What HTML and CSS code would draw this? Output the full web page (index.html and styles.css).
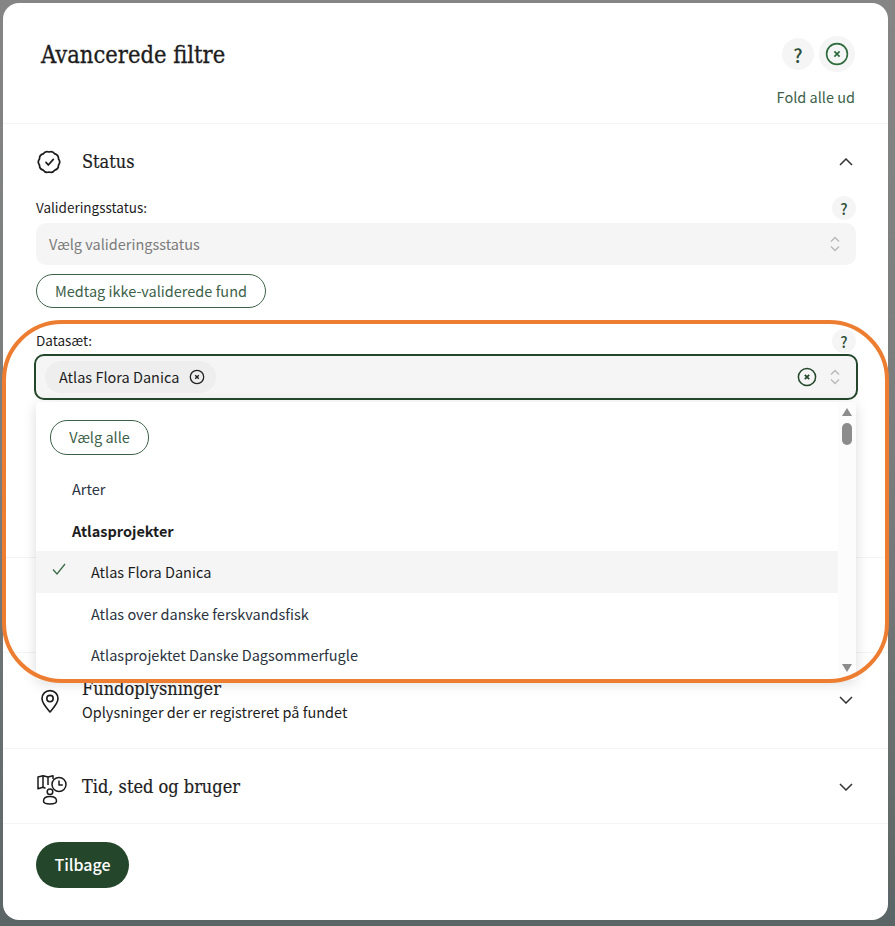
FILE: index.html
```html
<!DOCTYPE html>
<html lang="da">
  <head>
    <meta charset="UTF-8" />
    <title>Avancerede filtre</title>
    <link rel="stylesheet" href="styles.css">
  </head>

  <body>
    <div class="modal">
      <div class="modal-head">
        <h1 class="modal-title">Avancerede filtre</h1>
        <div class="modal-tools">
          <div class="modal-buttons">
            <span class="help help-big">?</span>
            <span class="close-round">
              <svg width="24" height="24" viewBox="0 0 24 24" fill="none" stroke="#2e6b3c">
                <circle cx="12" cy="12" r="10.4" stroke-width="1.6" />
                <path d="M9.4 9.4l5.2 5.2M14.6 9.4l-5.2 5.2" stroke-width="1.7" />
              </svg>
            </span>
          </div>
          <a class="fold-link" href="#">Fold alle ud</a>
        </div>
      </div>

      <div class="section section-status">
        <div class="section-head">
          <svg class="section-icon" width="26" height="26" viewBox="0 0 26 26" fill="none" stroke="#1b1b1b" stroke-width="1.7" stroke-linejoin="round" stroke-linecap="round">
            <path d="M13 3A5 5 0 0 1 18.88 4.91A5 5 0 0 1 22.51 9.91A5 5 0 0 1 22.51 16.09A5 5 0 0 1 18.88 21.09A5 5 0 0 1 13 23A5 5 0 0 1 7.12 21.09A5 5 0 0 1 3.49 16.09A5 5 0 0 1 3.49 9.91A5 5 0 0 1 7.12 4.91A5 5 0 0 1 13 3z" />
            <path d="M10 13.4l2.300 2.600 5-5.600" />
          </svg>
          <span class="section-name">Status</span>
          <svg class="chevron" width="14" height="8" viewBox="0 0 14 8" fill="none" stroke="#333" stroke-width="1.5">
            <path d="M1 7l6-6 6 6" />
          </svg>
        </div>

        <div class="field-label">
          <span class="field-name">Valideringsstatus:</span>
          <span class="help">?</span>
        </div>
        <div class="select">
          <span class="select-text">Vælg valideringsstatus</span>
          <svg class="updown" width="12" height="18" viewBox="0 0 12 18" fill="none" stroke="#b9b9b9" stroke-width="1.4">
            <path d="M2 6.5l4-4 4 4M2 11.5l4 4 4-4" />
          </svg>
        </div>
        <button class="pill pill-include">Medtag ikke-validerede fund</button>

        <div class="field-label field-label-data">
          <span class="field-name">Datasæt:</span>
          <span class="help">?</span>
        </div>
        <div class="field-wrap">
          <div class="select select-open">
            <span class="chip">
              <span class="chip-text">Atlas Flora Danica</span>
              <svg width="16" height="16" viewBox="0 0 16 16" fill="none" stroke="#222">
                <circle cx="8" cy="8" r="6.7" stroke-width="1.3" />
                <path d="M6.2 6.2l3.6 3.6M9.8 6.2l-3.6 3.6" stroke-width="1.4" />
              </svg>
            </span>
            <svg class="clear" width="20" height="20" viewBox="0 0 20 20" fill="none" stroke="#24472b">
              <circle cx="10" cy="10" r="8.6" stroke-width="1.5" />
              <path d="M7.8 7.8l4.4 4.4M12.2 7.8l-4.4 4.4" stroke-width="1.7" />
            </svg>
            <svg class="updown" width="12" height="18" viewBox="0 0 12 18" fill="none" stroke="#b9b9b9" stroke-width="1.4">
              <path d="M2 6.5l4-4 4 4M2 11.5l4 4 4-4" />
            </svg>
          </div>

          <div class="dropdown">
            <div class="dropdown-list">
              <button class="pill pill-all">Vælg alle</button>
              <div class="option option-top">Arter</div>
              <div class="option option-group">Atlasprojekter</div>
              <div class="option option-sub option-selected">
                <svg class="check" width="14" height="12" viewBox="0 0 14 12" fill="none" stroke="#3b6b48" stroke-width="1.3">
                  <path d="M1 6.5l4 4.5 8-10" />
                </svg>
                Atlas Flora Danica
              </div>
              <div class="option option-sub">Atlas over danske ferskvandsfisk</div>
              <div class="option option-sub">Atlasprojektet Danske Dagsommerfugle</div>
            </div>
            <div class="scrollbar">
              <span class="arrow-up"></span>
              <span class="thumb"></span>
              <span class="arrow-down"></span>
            </div>
          </div>
        </div>
      </div>

      <div class="section section-hidden"></div>

      <div class="section section-find">
        <div class="section-head">
          <svg class="section-icon icon-pin" width="26" height="26" viewBox="0 0 26 26" fill="none" stroke="#1b1b1b" stroke-width="1.6">
            <path d="M13 24c-1.2-1.7-8-8-8-13.4C5 6 8.500 2.600 13 2.600s8 3.400 8 8c0 5.400-6.800 11.700-8 13.400z" stroke-linejoin="round" />
            <circle cx="13" cy="10.600" r="3.200" />
          </svg>
          <div class="section-text">
            <span class="section-name">Fundoplysninger</span>
            <span class="section-sub">Oplysninger der er registreret på fundet</span>
          </div>
          <svg class="chevron" width="14" height="8" viewBox="0 0 14 8" fill="none" stroke="#333" stroke-width="1.5">
            <path d="M1 1l6 6 6-6" />
          </svg>
        </div>
      </div>

      <div class="section section-time">
        <div class="section-head">
          <svg class="section-icon icon-combo" width="30" height="30" viewBox="0 0 30 30" fill="none" stroke="#1b1b1b" stroke-width="1.500" stroke-linejoin="round">
            <path d="M8.500 13.200L6 12.300 1 13.800V2L6 .8l5 1.200 5-1.200V4" />
            <path d="M6 .8v11.500M11 2v8" />
            <circle cx="22" cy="9.500" r="7" />
            <path d="M22 5.500v4.500h3.800" />
            <circle cx="13" cy="16.800" r="2.800" />
            <path d="M6.500 26c0-3 3-4.500 6.500-4.500s6.500 1.500 6.500 4.500c0 2-2.500 3-6.500 3s-6.500-1-6.500-3z" />
          </svg>
          <span class="section-name">Tid, sted og bruger</span>
          <svg class="chevron" width="14" height="8" viewBox="0 0 14 8" fill="none" stroke="#333" stroke-width="1.5">
            <path d="M1 1l6 6 6-6" />
          </svg>
        </div>
      </div>

      <div class="modal-foot">
        <button class="back">Tilbage</button>
      </div>
    </div>

    <div class="highlight"></div>
  </body>
</html>
```

FILE: styles.css
```css
* {
  box-sizing: border-box;
}

html,
body {
  margin: 0;
  padding: 0;
}

body {
  width: 895px;
  height: 926px;
  padding: 3px 7px 6px 3px;
  overflow: hidden;
  position: relative;
  background: linear-gradient(180deg, #858585 0%, #7a7c7c 50%, #5c6565 100%);
  font-family: "Noto Sans CJK SC", "Noto Sans", sans-serif;
  font-size: 14.5px;
  color: #1d1d1d;
}

.modal {
  height: 917px;
  background: #ffffff;
  border-radius: 16px;
  display: flex;
  flex-direction: column;
}

.modal-head {
  height: 121px;
  padding: 0 33px 0 38px;
  display: flex;
  justify-content: space-between;
  border-bottom: 1px solid #f4f4f4;
}

.modal-title {
  margin: 37px 0 0 0;
  font-family: "DejaVu Serif Condensed", "DejaVu Serif", serif;
  font-size: 23.5px;
  line-height: 30px;
  font-weight: 400;
  -webkit-text-stroke: 0.3px #1d1d1d;
}

.modal-tools {
  display: flex;
  flex-direction: column;
  align-items: flex-end;
}

.modal-buttons {
  margin-top: 33px;
  display: flex;
  align-items: center;
  gap: 5px;
  height: 36px;
}

.help {
  width: 24px;
  height: 24px;
  border-radius: 50%;
  background: #f5f5f5;
  color: #2f4f38;
  font-size: 15px;
  font-weight: 500;
  display: flex;
  align-items: center;
  justify-content: center;
}

.help-big {
  width: 32px;
  height: 32px;
  font-size: 19px;
}

.close-round {
  width: 36px;
  height: 36px;
  border-radius: 50%;
  background: #f5f5f5;
  display: flex;
  align-items: center;
  justify-content: center;
}

.fold-link {
  margin-top: 15px;
  font-size: 14.5px;
  line-height: 20px;
  color: #3c6148;
  text-decoration: none;
}

.section {
  border-bottom: 1px solid #f4f4f4;
  padding: 0 32px 0 33px;
}

.section-status {
  height: 434px;
}

.section-hidden {
  height: 95px;
}

.section-find {
  height: 96px;
}

.section-time {
  height: 75px;
}

.section-head {
  display: flex;
  align-items: center;
}

.section-status .section-head {
  height: 72px;
  padding-top: 3px;
}

.section-find .section-head {
  height: 94px;
}

.section-time .section-head {
  height: 76px;
}

.section-icon {
  width: 26px;
  margin-right: 20px;
  flex: none;
}

.icon-pin {
  margin-left: 1px;
  margin-right: 19px;
  margin-top: 2px;
}

.icon-combo {
  width: 30px;
  margin-left: 1px;
  margin-top: 6px;
  margin-right: 15px;
}

.section-text {
  display: flex;
  flex-direction: column;
}

.section-name {
  font-family: "DejaVu Serif Condensed", "DejaVu Serif", serif;
  font-size: 18px;
  line-height: 24px;
  -webkit-text-stroke: 0.2px #1d1d1d;
}

.section-sub {
  font-size: 14.5px;
  line-height: 22px;
}

.chevron {
  margin-left: auto;
  margin-right: 3px;
}

.field-label {
  height: 24px;
  display: flex;
  justify-content: space-between;
  align-items: center;
  font-size: 13.5px;
}

.field-name {
  margin-bottom: 3px;
}

.field-label-data {
  margin-top: 21px;
}

.select {
  height: 42px;
  margin-top: 3px;
  padding: 0 15px 0 13px;
  background: #f5f5f5;
  border-radius: 10px;
  display: flex;
  align-items: center;
}

.select-text {
  color: #7b7b7b;
  margin-bottom: 1px;
}

.updown {
  margin-left: auto;
}

.pill {
  height: 34px;
  border: 1.500px solid #3c6148;
  border-radius: 17px;
  background: #ffffff;
  color: #3c6148;
  font-family: inherit;
  font-size: 14.5px;
  line-height: 1;
  display: block;
}

.pill-include {
  width: 230px;
  margin-top: 9px;
}

.field-wrap {
  position: relative;
}

.select-open {
  height: 46px;
  margin: 1px -2px 0;
  padding: 0 15px 0 9px;
  border: 2px solid #24472b;
}

.chip {
  height: 32px;
  padding: 0 11px 0 14px;
  border-radius: 16px;
  background: #eeeeee;
  display: flex;
  align-items: center;
  gap: 10px;
}

.chip-text {
  margin-bottom: 2px;
}

.clear {
  margin-left: auto;
}

.select-open .updown {
  margin-left: 12px;
}

.dropdown {
  position: absolute;
  top: 48px;
  left: 0;
  right: 0;
  height: 278px;
  background: #ffffff;
  border-radius: 4px;
  box-shadow: 0 3px 14px rgba(0, 0, 0, 0.14);
  display: flex;
  z-index: 5;
}

.dropdown-list {
  flex: 1;
}

.pill-all {
  width: 99px;
  height: 35px;
  margin: 18px 0 0 14px;
}

.option {
  height: 41.500px;
  display: flex;
  align-items: center;
  position: relative;
  color: #2a3340;
}

.option-top {
  margin-top: 13px;
  padding-left: 36px;
}

.option-group {
  padding-left: 36px;
  font-weight: 700;
  color: #1d1d1d;
}

.option-sub {
  padding-left: 55px;
}

.option-selected {
  background: #f5f5f5;
  color: #1d1d1d;
}

.check {
  position: absolute;
  left: 16px;
  top: 12px;
}

.scrollbar {
  width: 18px;
  display: flex;
  flex-direction: column;
  align-items: center;
  background: #fcfcfc;
  padding: 6px 0 8px;
}

.arrow-up {
  border-left: 5px solid transparent;
  border-right: 5px solid transparent;
  border-bottom: 8px solid #8c8c8c;
}

.thumb {
  width: 10px;
  height: 22px;
  margin-top: 7px;
  border-radius: 5px;
  background: #8c8c8c;
}

.arrow-down {
  margin-top: auto;
  border-left: 5px solid transparent;
  border-right: 5px solid transparent;
  border-top: 8px solid #8c8c8c;
}

.modal-foot {
  padding: 18px 0 0 33px;
}

.back {
  width: 93px;
  height: 46px;
  padding: 0 0 2px;
  border: 0;
  border-radius: 23px;
  background: #24472b;
  color: #ffffff;
  font-family: inherit;
  font-size: 16px;
  font-weight: 500;
}

.highlight {
  position: absolute;
  left: 2px;
  top: 320px;
  width: 887px;
  height: 363px;
  border: 4px solid #ed7d31;
  border-radius: 60px;
  pointer-events: none;
  z-index: 10;
}
```
